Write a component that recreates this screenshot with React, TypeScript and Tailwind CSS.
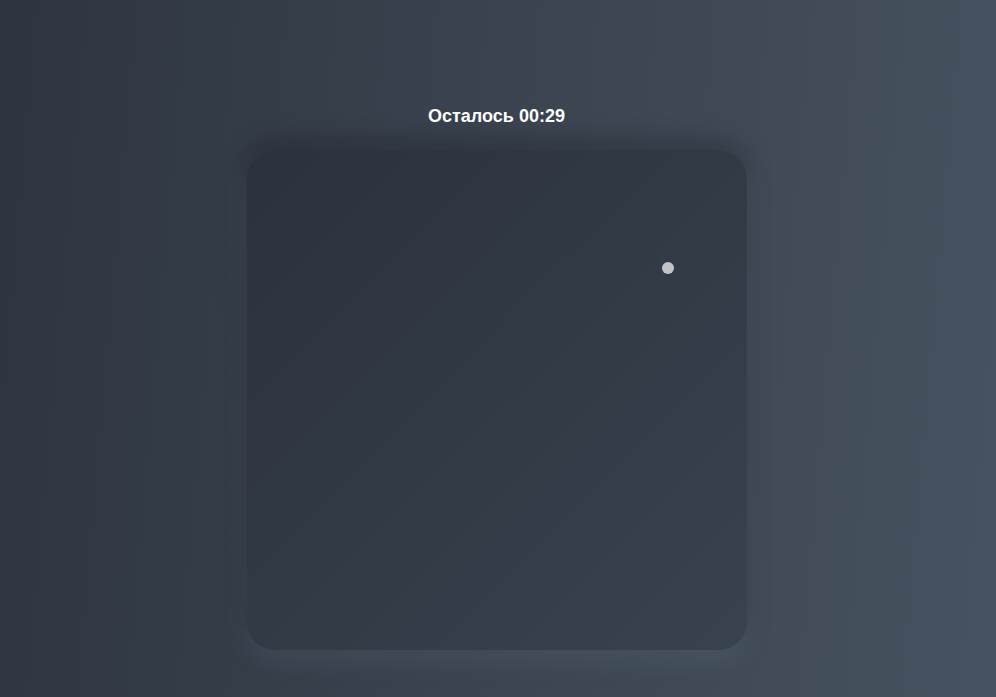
import React from "react";

const App = () => {
	// dot position inside the play field
	const dot = { x: 415, y: 112 };

	return (
		<div className="min-h-[697px] w-full bg-[linear-gradient(95deg,#2e3540,#475260)] flex flex-col items-center pt-[102px] font-['Liberation_Sans',Arial,sans-serif]">
			<h1 className="text-lg leading-7 font-bold text-white -ml-[3px]">Осталось 00:29</h1>

			<div className="relative mt-5 -ml-[3px] w-[500px] h-[500px] rounded-[28px] bg-gradient-to-br from-[#2b323d] to-[#39424f] shadow-[0_-10px_24px_rgba(0,0,0,0.22),0_10px_24px_rgba(120,135,155,0.2)]">
				<div
					className="absolute w-3 h-3 rounded-full bg-[#c2c4c7]"
					style={{ left: dot.x, top: dot.y }}
				/>
			</div>
		</div>
	);
};

export default App;
